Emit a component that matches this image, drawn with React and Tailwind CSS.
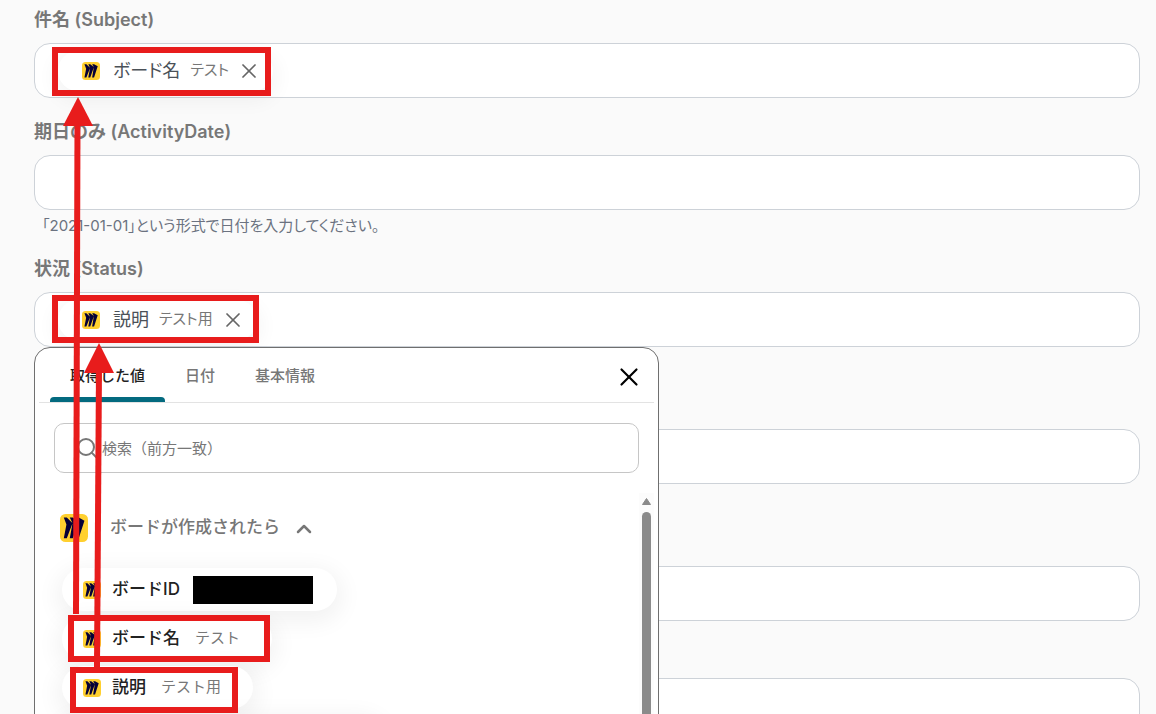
import { X, Search, ChevronUp } from "lucide-react";

function BoardIcon({ className }) {
  return (
    <svg viewBox="0 0 28 28" className={className} aria-hidden="true">
      <rect width="28" height="28" rx="5.5" fill="#ffd02f" />
      <path
        transform="translate(3.8 3.6) scale(0.86)"
        fill="#050038"
        d="M17.392 0H13.9L17 4.808 10.444 0H6.949l3.102 6.3L3.494 0H0l3.05 8.131L0 24h3.494L10.05 6.985 6.949 24h3.494L17 5.494 13.899 24h3.493L24 3.672 17.392 0z"
      />
    </svg>
  );
}

function ValueChip({ name, value }) {
  return (
    <div className="flex h-10 shrink-0 items-center rounded-full bg-white pr-3 pl-6 shadow-[0_6px_18px_6px_rgba(0,0,0,0.04)] [font-feature-settings:'palt']">
      <BoardIcon className="size-[18px]" />
      <span className="ml-[13px] text-lg text-[#4b5158]">{name}</span>
      <span className="ml-[10px] text-[15px] text-[#777]">{value}</span>
      <button type="button" aria-label="削除" className="ml-2 text-[#666]">
        <X className="size-6" strokeWidth={1.75} />
      </button>
    </div>
  );
}

function Field({ id, label, ariaLabel, chip, help, spacer, children }) {
  return (
    <div className="relative">
      <label htmlFor={id} className="block h-6 text-lg leading-6 font-semibold text-[#777]">
        {label}
      </label>
      <div className="relative mt-[11px]">
        <div className="flex h-[55px] items-center rounded-2xl border border-[#cdd2d8] bg-white pl-[23px]">
          {chip}
          <input id={id} aria-label={ariaLabel} className="h-full min-w-0 flex-1 bg-transparent outline-none" />
        </div>
        {children}
      </div>
      {help && (
        <p className="pt-[6px] pl-2 text-[15px] leading-[19px] text-[#6b7280] [font-feature-settings:'palt']">{help}</p>
      )}
      {spacer && <div className="h-[25px]" />}
    </div>
  );
}

function OptionChip({ name, children }) {
  return (
    <button
      type="button"
      className="flex h-[43px] items-center rounded-full bg-white pl-[21px] shadow-[0_6px_22px_6px_rgba(0,0,0,0.05)]"
    >
      <BoardIcon className="size-[18px]" />
      <span className="ml-[11px] text-[17px] font-medium text-[#222]">{name}</span>
      {children}
    </button>
  );
}

function ValuePicker() {
  return (
    <section className="absolute top-full left-0 z-10 w-[625px] rounded-t-2xl border border-[#6f6f6f] bg-white">
      <div className="mx-1 flex h-[55px] border-b border-[#e3e3e3] pl-[11px]">
        <div role="tablist" className="flex">
          <button
            type="button"
            role="tab"
            aria-selected="true"
            className="relative w-[115px] pt-[2px] text-[15px] font-medium text-[#222]"
          >
            取得した値
            <span className="absolute inset-x-0 bottom-0 h-[5px] rounded-t-[4px] bg-[#036a7f]" />
          </button>
          <button type="button" role="tab" className="ml-5 pt-[2px] text-[15px] font-medium text-[#777]">日付</button>
          <button type="button" role="tab" className="ml-10 pt-[2px] text-[15px] font-medium text-[#777]">基本情報</button>
        </div>
        <button type="button" aria-label="閉じる" className="mt-1 mr-[10px] ml-auto text-black">
          <X className="size-[30px]" strokeWidth={1.75} />
        </button>
      </div>
      <div className="mx-[19px] mt-5 flex h-[50px] items-center rounded-[10px] border border-[#c6c6c6] pl-5">
        <Search className="size-6 shrink-0 text-[#777]" strokeWidth={2} />
        <input
          type="search"
          aria-label="検索（前方一致）"
          placeholder="検索（前方一致）"
          className="h-full min-w-0 flex-1 bg-transparent pl-[3px] text-[15px] text-[#333] outline-none placeholder:text-[#777]"
        />
      </div>
      <div className="mt-5 mr-1 flex">
        <div className="flex-1 overflow-hidden pb-6 pl-[25px]">
          <button type="button" className="mt-[21px] flex h-7 items-center text-[17px] font-medium text-[#777]">
            <BoardIcon className="size-7" />
            <span className="ml-[22px]">ボードが作成されたら</span>
            <ChevronUp className="mt-[2px] ml-3 size-6" strokeWidth={2.5} />
          </button>
          <div className="mt-[26px] ml-[2px] flex flex-col items-start gap-[6px]">
            <OptionChip name="ボードID">
              <span className="mr-6 ml-[13px] h-7 w-[120px] bg-black" />
            </OptionChip>
            <OptionChip name="ボード名">
              <span className="mr-8 ml-[15px] text-[15px] text-[#777]">テスト</span>
            </OptionChip>
            <OptionChip name="説明">
              <span className="mr-8 ml-[15px] text-[15px] text-[#777]">テスト用</span>
            </OptionChip>
            <div className="h-[43px] w-[320px] rounded-full bg-white shadow-[0_6px_22px_6px_rgba(0,0,0,0.05)]" />
          </div>
        </div>
        <div className="flex w-[15px] flex-col items-center bg-[#fcfcfc] pt-[5px]">
          <svg viewBox="0 0 9 7" className="h-[7px] w-[9px]" aria-hidden="true">
            <path d="M4.5 0.5 8.5 6.5H0.5Z" fill="#8b8b8b" stroke="#8b8b8b" strokeLinejoin="round" />
          </svg>
          <div className="mt-[7px] w-[9px] flex-1 rounded-t-full bg-[#8b8b8b]" />
        </div>
      </div>
    </section>
  );
}

function Annotations() {
  return (
    <svg
      width="300"
      height="714"
      viewBox="0 0 300 714"
      className="pointer-events-none absolute top-0 left-0 z-20"
      aria-hidden="true"
    >
      <g fill="none" stroke="#e81c1c" strokeWidth="6">
        <rect x="55" y="50" width="213" height="43" />
        <rect x="55" y="298" width="201" height="42" />
        <rect x="71" y="618" width="196" height="41" />
        <rect x="73" y="670" width="162" height="40" />
        <path d="M76 614 77.5 120" />
        <path d="M97 668 99 368" />
      </g>
      <path d="M78 97 93 126H63Z" fill="#e81c1c" />
      <path d="M99 343 114 373H84Z" fill="#e81c1c" />
    </svg>
  );
}

export default function App() {
  return (
    <main className="relative h-screen overflow-hidden bg-[#fafafa] pt-2 pr-4 pl-[34px] font-[Inter,'Noto_Sans_CJK_JP',sans-serif]">
      <form className="flex flex-col gap-[22px]">
        <Field id="subject" label="件名 (Subject)" chip={<ValueChip name="ボード名" value="テスト" />} />
        <Field
          id="activity-date"
          label="期日のみ (ActivityDate)"
          help="「2021-01-01」という形式で日付を入力してください。"
        />
        <Field id="status" label="状況 (Status)" chip={<ValueChip name="説明" value="テスト用" />} spacer>
          <ValuePicker />
        </Field>
        <Field id="field-4" ariaLabel="項目4" spacer />
        <Field id="field-5" ariaLabel="項目5" />
        <Field id="field-6" ariaLabel="項目6" />
      </form>
      <Annotations />
    </main>
  );
}
